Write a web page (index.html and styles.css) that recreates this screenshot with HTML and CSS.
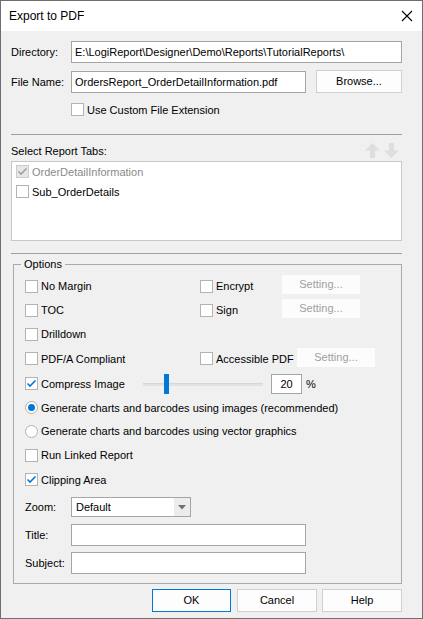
FILE: index.html
```html
<!DOCTYPE html>
<html>
<head>
<meta charset="utf-8">
<link rel="stylesheet" href="styles.css">
</head>
<body>
<div class="window">
  <div class="titlebar">
    <span class="title">Export to PDF</span>
    <svg class="close" width="12" height="12" viewBox="0 0 12 12"><path d="M1 1L11 11M11 1L1 11" stroke="#000" stroke-width="1.1" fill="none"/></svg>
  </div>
  <div class="content">
    <div class="row r-dir">
      <span class="lbl">Directory:</span>
      <div class="input w-dir">E:\LogiReport\Designer\Demo\Reports\TutorialReports\</div>
    </div>
    <div class="row r-file">
      <span class="lbl">File Name:</span>
      <div class="input w-file">OrdersReport_OrderDetailInformation.pdf</div>
      <div class="btn browse">Browse...</div>
    </div>
    <div class="row r-ext">
      <span class="cb"></span><span class="cbtext">Use Custom File Extension</span>
    </div>
    <div class="sep sep1"></div>
    <div class="tabs-head">
      <span>Select Report Tabs:</span>
      <div class="arrows">
        <svg width="17" height="15" viewBox="0 0 17 15"><path d="M8.5 0L16 7.5H11V15H6V7.5H1Z" fill="#dedede"/></svg>
        <svg width="17" height="15" viewBox="0 0 17 15"><path d="M8.5 15L16 7.5H11V0H6V7.5H1Z" fill="#dedede"/></svg>
      </div>
    </div>
    <div class="list">
      <div class="item disabled"><span class="cb cb-dis"><svg width="11" height="11" viewBox="0 0 11 11"><path d="M1.5 5.5L4 8L9.5 2.5" stroke="#a0a0a0" stroke-width="1.6" fill="none"/></svg></span><span class="cbtext">OrderDetailInformation</span></div>
      <div class="item"><span class="cb"></span><span class="cbtext">Sub_OrderDetails</span></div>
    </div>
    <div class="sep sep2"></div>
    <fieldset class="group">
      <legend>Options</legend>
      <div class="orow h24">
        <div class="cleft"><span class="cb"></span><span class="cbtext">No Margin</span></div>
        <div class="cright"><span class="cb"></span><span class="cbtext rl">Encrypt</span><span class="btn setting">Setting...</span></div>
      </div>
      <div class="orow h24">
        <div class="cleft"><span class="cb"></span><span class="cbtext">TOC</span></div>
        <div class="cright"><span class="cb"></span><span class="cbtext rl">Sign</span><span class="btn setting">Setting...</span></div>
      </div>
      <div class="orow h24">
        <div class="cleft"><span class="cb"></span><span class="cbtext">Drilldown</span></div>
      </div>
      <div class="orow h25">
        <div class="cleft"><span class="cb"></span><span class="cbtext">PDF/A Compliant</span></div>
        <div class="cright"><span class="cb"></span><span class="cbtext rl2">Accessible PDF</span><span class="btn setting">Setting...</span></div>
      </div>
      <div class="orow h25">
        <div class="cmp"><span class="cb"><svg width="11" height="11" viewBox="0 0 11 11"><path d="M1.5 5.5L4 8L9.5 2.5" stroke="#0078d7" stroke-width="1.6" fill="none"/></svg></span><span class="cbtext">Compress Image</span></div>
        <div class="slider"><div class="track"></div><div class="thumb"></div></div>
        <div class="input pct">20</div>
        <span class="pctsign">%</span>
      </div>
      <div class="orow h23">
        <span class="radio on"></span><span class="cbtext">Generate charts and barcodes using images (recommended)</span>
      </div>
      <div class="orow h24">
        <span class="radio"></span><span class="cbtext">Generate charts and barcodes using vector graphics</span>
      </div>
      <div class="orow h24">
        <span class="cb"></span><span class="cbtext">Run Linked Report</span>
      </div>
      <div class="orow h25">
        <span class="cb"><svg width="11" height="11" viewBox="0 0 11 11"><path d="M1.5 5.5L4 8L9.5 2.5" stroke="#0078d7" stroke-width="1.6" fill="none"/></svg></span><span class="cbtext">Clipping Area</span>
      </div>
      <div class="frow f-zoom">
        <span class="flbl">Zoom:</span>
        <div class="combo"><span class="ctext">Default</span><span class="carrow"><svg width="8" height="5" viewBox="0 0 8 5"><path d="M0 0H8L4 4.5Z" fill="#707070"/></svg></span></div>
      </div>
      <div class="frow f-title">
        <span class="flbl">Title:</span>
        <div class="input w-meta"></div>
      </div>
      <div class="frow f-subj">
        <span class="flbl">Subject:</span>
        <div class="input w-meta"></div>
      </div>
    </fieldset>
    <div class="buttons">
      <div class="btn dbtn default">OK</div>
      <div class="btn dbtn">Cancel</div>
      <div class="btn dbtn">Help</div>
    </div>
  </div>
</div>
</body>
</html>
```

FILE: styles.css
```css
html, body {
  margin: 0;
  padding: 0;
  background: #ffffff;
}
body {
  font-family: "Liberation Sans", Arial, sans-serif;
  font-size: 11px;
  color: #000;
}
.window {
  width: 423px;
  height: 619px;
  box-sizing: border-box;
  border: 1px solid #6f6f6f;
  background: #f0f0f0;
  overflow: hidden;
}
.titlebar {
  height: 30px;
  background: #ffffff;
  display: flex;
  align-items: center;
  justify-content: space-between;
  padding: 0 9px 0 8px;
}
.title {
  font-size: 12px;
  line-height: 16px;
}
.close {
  display: block;
}
.content {
  padding: 10px 0 0 10px;
  width: 391px;
}
.row {
  display: flex;
  align-items: center;
}
.lbl {
  width: 60px;
  flex: none;
}
.input {
  box-sizing: border-box;
  height: 22px;
  border: 1px solid #a5a5a5;
  background: #fff;
  padding: 0 3px;
  line-height: 20px;
  white-space: nowrap;
  overflow: hidden;
}
.w-dir { width: 331px; }
.w-file { width: 235px; }
.r-dir { height: 22px; }
.r-file { height: 23px; margin-top: 7px; }
.btn {
  box-sizing: border-box;
  background: #fdfdfd;
  border: 1px solid #d0d0d0;
  text-align: center;
}
.browse {
  width: 86px;
  height: 23px;
  line-height: 21px;
  margin-left: 10px;
}
.r-ext {
  margin-top: 10px;
  padding-left: 60px;
  height: 13px;
}
.cb {
  box-sizing: border-box;
  width: 13px;
  height: 13px;
  flex: none;
  border: 1px solid #b3b3b3;
  background: #fff;
  display: flex;
  align-items: center;
  justify-content: center;
}
.cb svg { display: block; }
.cb-dis {
  background: #e6e6e6;
  border-color: #cccccc;
}
.cbtext {
  margin-left: 3px;
  white-space: nowrap;
  line-height: 16px;
}
.sep {
  height: 1px;
  background: #a0a0a0;
}
.sep1 { margin-top: 18px; }
.tabs-head {
  margin-top: 8px;
  height: 15px;
  display: flex;
  align-items: center;
  justify-content: space-between;
  padding-right: 2px;
}
.arrows {
  display: flex;
  gap: 2px;
}
.arrows svg { display: block; }
.list {
  box-sizing: border-box;
  margin-top: 3px;
  height: 80px;
  border: 1px solid #c8c8c8;
  background: #fff;
  padding: 3px 0 0 4px;
}
.item {
  display: flex;
  align-items: center;
  height: 13px;
  margin-bottom: 7px;
}
.item.disabled .cbtext { color: #8a8a8a; }
.sep2 { margin-top: 12px; }
.group {
  margin: 2px 0 0 2px;
  border: 1px solid #a9a9a9;
  padding: 2px 10px 9px 11px;
  min-width: 0;
}
.group legend {
  padding: 0 3px;
  margin-left: -4px;
  line-height: 16px;
}
.orow {
  display: flex;
  align-items: center;
}
.h23 { height: 23px; }
.h24 { height: 24px; }
.h25 { height: 25px; }
.cleft {
  width: 175px;
  display: flex;
  align-items: center;
}
.cright {
  display: flex;
  align-items: center;
}
.rl { width: 66px; }
.rl2 { width: 81px; }
.setting {
  width: 78px;
  height: 19px;
  line-height: 17px;
  color: #a0a0a0;
  border-color: #fcfcfc;
  background: #fcfcfc;
  margin-top: -3px;
}
.cmp {
  width: 118px;
  display: flex;
  align-items: center;
}
.slider {
  position: relative;
  width: 120px;
  height: 20px;
}
.track {
  position: absolute;
  left: 0;
  right: 0;
  top: 9px;
  height: 3px;
  background: #e2e2e2;
  border-top: 1px solid #d6d6d6;
  box-sizing: border-box;
}
.thumb {
  position: absolute;
  left: 21px;
  top: 0;
  width: 5px;
  height: 20px;
  background: #0078d7;
}
.pct {
  width: 31px;
  height: 20px;
  line-height: 18px;
  margin-left: 8px;
  text-align: center;
}
.pctsign {
  margin-left: 4px;
}
.radio {
  box-sizing: border-box;
  width: 13px;
  height: 13px;
  flex: none;
  border-radius: 50%;
  border: 1px solid #b3b3b3;
  background: #fff;
  display: flex;
  align-items: center;
  justify-content: center;
}
.radio.on::after {
  content: "";
  width: 7px;
  height: 7px;
  border-radius: 50%;
  background: #0078d7;
}
.frow {
  display: flex;
  align-items: center;
}
.flbl {
  width: 46px;
  flex: none;
}
.f-zoom { margin-top: 5px; height: 20px; }
.f-title { margin-top: 7px; height: 22px; }
.f-subj { margin-top: 6px; height: 22px; }
.combo {
  box-sizing: border-box;
  width: 120px;
  height: 20px;
  border: 1px solid #a5a5a5;
  background: #fff;
  display: flex;
  align-items: center;
  justify-content: space-between;
}
.ctext { padding-left: 4px; line-height: 18px; }
.carrow {
  width: 16px;
  height: 18px;
  background: #ececec;
  display: flex;
  align-items: center;
  justify-content: center;
}
.carrow svg { display: block; }
.w-meta { width: 235px; }
.buttons {
  display: flex;
  justify-content: flex-end;
  gap: 5px;
  margin-top: 5px;
}
.dbtn {
  width: 80px;
  height: 23px;
  line-height: 21px;
}
.dbtn.default {
  width: 79px;
  border-color: #0078d7;
  margin-right: 1px;
}
```
